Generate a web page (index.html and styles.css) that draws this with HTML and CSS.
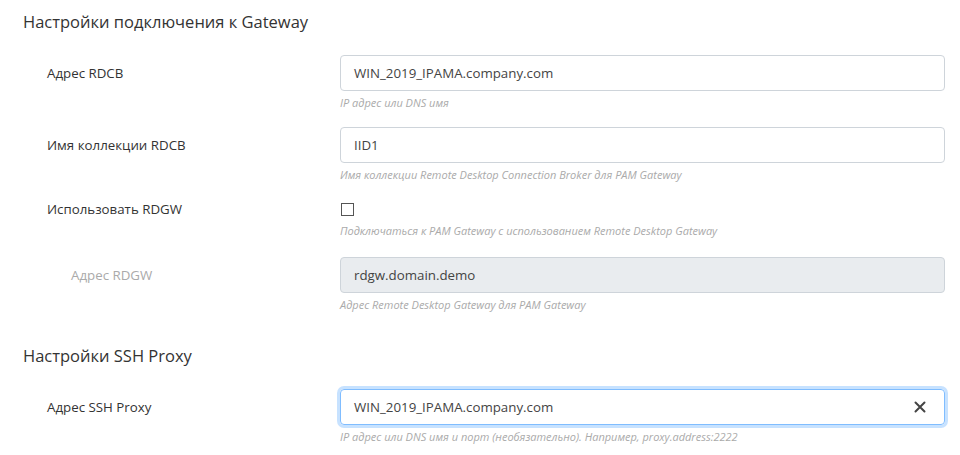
FILE: index.html
```html
<!DOCTYPE html>
<html lang="ru">
<head>
<meta charset="utf-8">
<link rel="stylesheet" href="styles.css">
</head>
<body>
<div class="page">
  <h2 class="section-title">Настройки подключения к Gateway</h2>
  <div class="row">
    <label class="label">Адрес RDCB</label>
    <div class="field">
      <div class="input">WIN_2019_IPAMA.company.com</div>
      <div class="help">IP адрес или DNS имя</div>
    </div>
  </div>
  <div class="row">
    <label class="label">Имя коллекции RDCB</label>
    <div class="field">
      <div class="input">IID1</div>
      <div class="help">Имя коллекции Remote Desktop Connection Broker для PAM Gateway</div>
    </div>
  </div>
  <div class="row row-check">
    <label class="label">Использовать RDGW</label>
    <div class="field">
      <div class="check-wrap"><span class="checkbox"></span></div>
      <div class="help">Подключаться к PAM Gateway с использованием Remote Desktop Gateway</div>
    </div>
  </div>
  <div class="row row-disabled">
    <label class="label label-sub">Адрес RDGW</label>
    <div class="field">
      <div class="input input-disabled">rdgw.domain.demo</div>
      <div class="help">Адрес Remote Desktop Gateway для PAM Gateway</div>
    </div>
  </div>
  <h2 class="section-title section-2">Настройки SSH Proxy</h2>
  <div class="row row-ssh">
    <label class="label">Адрес SSH Proxy</label>
    <div class="field">
      <div class="input input-focus"><span>WIN_2019_IPAMA.company.com</span>
        <svg class="clear" width="12" height="12" viewBox="0 0 12 12"><path d="M1.5 1.5 L10.5 10.5 M10.5 1.5 L1.5 10.5" stroke="#444" stroke-width="2" stroke-linecap="round"/></svg>
      </div>
      <div class="help">IP адрес или DNS имя и порт (необязательно). Например, proxy.address:2222</div>
    </div>
  </div>
</div>
</body>
</html>
```

FILE: styles.css
```css
* { box-sizing: border-box; }
html, body { margin: 0; padding: 0; background: #fff; }
body { font-family: "Open Sans", "Noto Sans", sans-serif; color: #333; }
.page { padding: 10px 15px 0 23px; }
.section-title {
  margin: 0;
  font-size: 16.5px;
  font-weight: 400;
  color: #333;
  line-height: 24px;
  height: 24px;
}
.section-2 { margin-top: 31px; }
.row {
  display: flex;
  margin-top: 21px;
}
.row + .row { margin-top: 16px; }
.label {
  width: 317px;
  padding-left: 24px;
  font-size: 13.3px;
  line-height: 36px;
  color: #333;
}
.label-sub { padding-left: 48px; color: #aaa; }
.field { flex: 1; }
.input {
  height: 36px;
  border: 1px solid #ced4da;
  border-radius: 4px;
  padding: 0 12px 0 13px;
  font-size: 13.3px;
  line-height: 34px;
  color: #444;
  display: flex;
  align-items: center;
  justify-content: space-between;
}
.input-disabled { background: #e9ecef; }
.input-focus {
  border-color: #80bdff;
  box-shadow: 0 0 0 3px rgba(0,123,255,0.22);
}
.clear { margin-right: 6px; }
.help {
  margin-top: 4px;
  font-size: 11px;
  font-style: italic;
  color: #aaa;
  line-height: 16px;
}
.row.row-check { margin-top: 16px; }
.row-check .label { line-height: 20px; }
.check-wrap { height: 20px; display: flex; align-items: center; }
.checkbox {
  display: block;
  width: 13px;
  height: 13px;
  border: 1px solid #555;
  background: #fff;
  margin-left: 1px;
}
.row.row-disabled { margin-top: 18px; }
.row.row-ssh { margin-top: 21px; }
```
